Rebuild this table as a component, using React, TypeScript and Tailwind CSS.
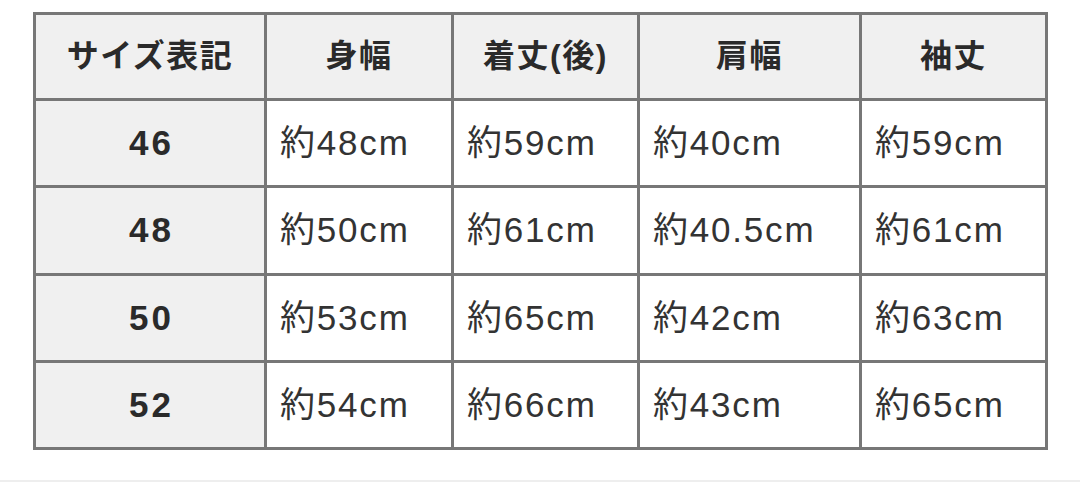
import React from "react";

const headers = ["サイズ表記", "身幅", "着丈(後)", "肩幅", "袖丈"];
const rows = [
  ["46", "約48cm", "約59cm", "約40cm", "約59cm"],
  ["48", "約50cm", "約61cm", "約40.5cm", "約61cm"],
  ["50", "約53cm", "約65cm", "約42cm", "約63cm"],
  ["52", "約54cm", "約66cm", "約43cm", "約65cm"],
];

export default function App() {
  return (
    <div
      className="w-[1080px] h-[482px] bg-white relative overflow-hidden text-[#2a2a2a]"
      style={{ fontFamily: '"Liberation Sans", "Noto Sans CJK JP", sans-serif' }}
    >
      <div className="pt-[12px] pl-[33px]">
        <div className="grid w-[1015px] grid-cols-[228px_184px_183px_219px_183px] grid-rows-[83px_84px_85px_84px_84px] gap-[3px] border-[3px] border-[#777] bg-[#777]">
          {headers.map((h) => (
            <div
              key={h}
              className="bg-[#f0f0f0] flex items-center justify-center text-[32px] font-bold tracking-[1.5px] pb-[2px]"
            >
              {h}
            </div>
          ))}
          {rows.map((r) =>
            r.map((c, i) =>
              i === 0 ? (
                <div
                  key={r[0] + i}
                  className="bg-[#f0f0f0] flex items-center justify-center text-[35px] font-bold tracking-[3px] pl-[3px]"
                >
                  {c}
                </div>
              ) : (
                <div
                  key={r[0] + i}
                  className="bg-white flex items-center pl-[13px] text-[35px] tracking-[1.8px] text-[#333]"
                >
                  {c}
                </div>
              )
            )
          )}
        </div>
      </div>
      <div className="absolute left-0 right-0 top-[480px] h-[2px] bg-[#eeeeee]" />
    </div>
  );
}
